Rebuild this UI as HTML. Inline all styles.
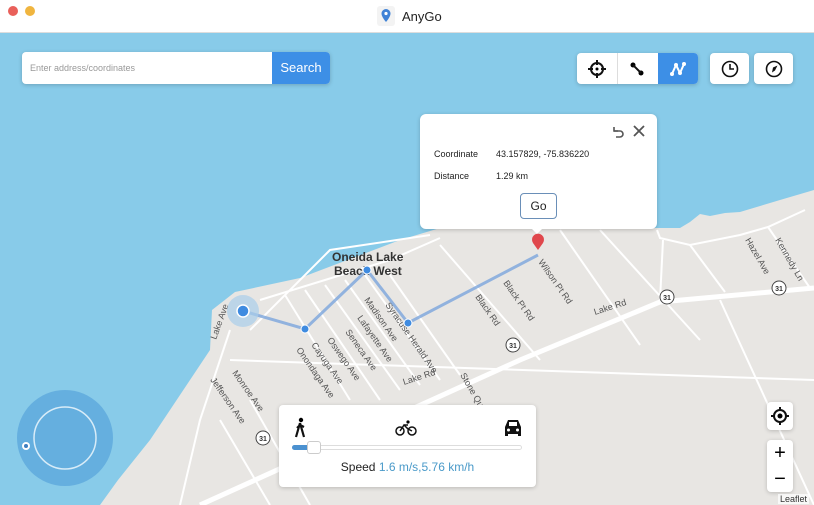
<!DOCTYPE html>
<html><head><style>
*{margin:0;padding:0;box-sizing:border-box}
body{width:814px;height:505px;overflow:hidden;font-family:"Liberation Sans",sans-serif;background:#fff;position:relative}
.title{position:absolute;left:0;top:0;width:814px;height:33px;background:#fff;border-bottom:1px solid #ddd}
.dot{position:absolute;top:6px;width:10px;height:10px;border-radius:50%}
.map{position:absolute;left:0;top:33px}
.abs{position:absolute}
.card{background:#fff;border-radius:4px;box-shadow:0 1px 4px rgba(0,0,0,.2)}
</style></head><body>
<div class="title">
<div class="dot" style="left:8px;background:#e9605a"></div>
<div class="dot" style="left:25px;background:#f0b53f"></div>
<svg class="abs" style="left:377px;top:6px" width="18" height="20"><rect x="0" y="0" width="18" height="20" rx="3" fill="#f3f3f3"/><path d="M9 3a4.5 4.5 0 0 1 4.5 4.5C13.5 11 9 16 9 16S4.5 11 4.5 7.5A4.5 4.5 0 0 1 9 3z" fill="#3f82d6"/><circle cx="9" cy="7.5" r="1.6" fill="#fff"/></svg>
<div class="abs" style="left:402px;top:9px;font-size:13px;color:#222">AnyGo</div>
</div>
<svg class="map" width="814" height="472" viewBox="0 33 814 472">
<rect x="0" y="33" width="814" height="472" fill="#88cbe9"/>
<path d="M814 190 L780 200 L740 212 L725 213 L710 216 L700 214 L690 222 L680 228 L657 228 L560 226 L440 228 L400 240 L300 278 L235 292 L212 310 L210 350 L180 395 L150 440 L118 480 L100 505 L814 505Z" fill="#e8e6e3"/>
<g stroke="#fff" stroke-width="2" fill="none">
<path d="M230 360 L814 380"/><path d="M250 330 L330 250 L430 235"/>
<path d="M260 300 L390 260 L440 238"/>
<path d="M285 295 L350 400"/><path d="M305 290 L380 400"/><path d="M325 285 L400 390"/><path d="M345 280 L420 385"/><path d="M365 275 L440 380"/><path d="M385 268 L460 375"/>
<path d="M440 245 L540 360"/><path d="M560 230 L640 345"/><path d="M600 230 L700 340"/><path d="M690 245 L725 292"/><path d="M768 227 L810 288"/>
<path d="M230 330 L200 420 L180 505"/><path d="M220 420 L270 505"/><path d="M250 400 L310 505"/>
<path d="M657 230 L660 238 L690 245 L740 235 L768 227 L805 210"/><path d="M663 240 L660 300"/><path d="M720 300 L814 505"/>
</g>
<path d="M200 505 L520 360 L660 302 L814 288" stroke="#fff" stroke-width="5" fill="none"/>
<g font-size="9" fill="#555">
<text x="595" y="315" transform="rotate(-18 595 315)">Lake Rd</text>
<text x="404" y="385" transform="rotate(-18 404 385)">Lake Rd</text>
<text x="538" y="262" transform="rotate(55 538 262)">Wilson Pt Rd</text>
<text x="503" y="283" transform="rotate(55 503 283)">Black Pt Rd</text>
<text x="475" y="297" transform="rotate(55 475 297)">Black Rd</text>
<text x="385" y="305" transform="rotate(55 385 305)">Syracuse Herald Ave</text>
<text x="364" y="300" transform="rotate(55 364 300)">Madison Ave</text>
<text x="357" y="318" transform="rotate(55 357 318)">Lafayette Ave</text>
<text x="345" y="332" transform="rotate(55 345 332)">Seneca Ave</text>
<text x="327" y="340" transform="rotate(55 327 340)">Oswego Ave</text>
<text x="311" y="345" transform="rotate(55 311 345)">Cayuga Ave</text>
<text x="296" y="350" transform="rotate(55 296 350)">Onondaga Ave</text>
<text x="216" y="340" transform="rotate(-70 216 340)">Lake Ave</text>
<text x="232" y="373" transform="rotate(55 232 373)">Monroe Ave</text>
<text x="210" y="380" transform="rotate(55 210 380)">Jefferson Ave</text>
<text x="460" y="375" transform="rotate(60 460 375)">Stone Quarry</text>
<text x="745" y="240" transform="rotate(60 745 240)">Hazel Ave</text>
<text x="775" y="240" transform="rotate(60 775 240)">Kennedy Ln</text>
</g>
<text x="332" y="261" font-size="12" font-weight="bold" fill="#333">Oneida Lake</text>
<text x="334" y="275" font-size="12" font-weight="bold" fill="#333">Beach West</text>
<g font-size="7" font-weight="bold" fill="#333" text-anchor="middle">
<circle cx="667" cy="297" r="7" fill="#fff" stroke="#444"/><text x="667" y="300">31</text>
<circle cx="779" cy="288" r="7" fill="#fff" stroke="#444"/><text x="779" y="291">31</text>
<circle cx="513" cy="345" r="7" fill="#fff" stroke="#444"/><text x="513" y="348">31</text>
<circle cx="263" cy="438" r="7" fill="#fff" stroke="#444"/><text x="263" y="441">31</text>
</g>
<path d="M243 311 L305 329 L367 270 L408 323 L538 255" stroke="#7ba5dc" stroke-width="3" fill="none" opacity=".8"/>
<circle cx="243" cy="311" r="16" fill="#a9cdea" opacity=".7"/>
<circle cx="243" cy="311" r="6" fill="#3f8be0" stroke="#fff" stroke-width="1.5"/>
<circle cx="305" cy="329" r="4" fill="#3f8be0" stroke="#fff"/>
<circle cx="367" cy="270" r="4" fill="#3f8be0" stroke="#fff"/>
<circle cx="408" cy="323" r="4" fill="#3f8be0" stroke="#fff"/>
<path d="M538 250 L533 243 A6 6 0 1 1 543 243Z" fill="#e0474c"/>
<circle cx="65" cy="438" r="48" fill="#5da7dc" opacity=".8"/>
<circle cx="65" cy="438" r="31" fill="none" stroke="#d8ecf8" stroke-width="1.5"/>
<circle cx="26" cy="446" r="4" fill="#fff"/><circle cx="26" cy="446" r="2" fill="#3f7fc0"/>
</svg>
<div class="abs card" style="left:22px;top:52px;width:308px;height:32px;overflow:hidden">
<div class="abs" style="left:8px;top:11px;font-size:9px;color:#999">Enter address/coordinates</div>
<div class="abs" style="left:250px;top:0;width:58px;height:32px;background:#3d8fe6;color:#fff;font-size:13px;line-height:32px;text-align:center">Search</div>
</div>
<div class="abs card" style="left:577px;top:53px;width:121px;height:31px;overflow:hidden">
<div class="abs" style="left:40px;top:0;width:1px;height:31px;background:#ddd"></div>
<div class="abs" style="left:81px;top:0;width:40px;height:31px;background:#3d8fe6"></div>
<svg class="abs" style="left:10px;top:6px" width="20" height="20"><circle cx="10" cy="10" r="6" fill="none" stroke="#111" stroke-width="2"/><circle cx="10" cy="10" r="1.5"/><path d="M10 1v5M10 14v5M1 10h5M14 10h5" stroke="#111" stroke-width="2"/></svg>
<svg class="abs" style="left:50px;top:6px" width="20" height="20"><circle cx="6" cy="6" r="2.5"/><circle cx="14" cy="14" r="2.5"/><path d="M6 6L14 14" stroke="#111" stroke-width="2"/></svg>
<svg class="abs" style="left:91px;top:6px" width="20" height="20"><path d="M4 15L8 6L12 14L16 5" stroke="#fff" stroke-width="2" fill="none"/><circle cx="4" cy="15" r="2" fill="#fff"/><circle cx="8" cy="6" r="2" fill="#fff"/><circle cx="12" cy="14" r="2" fill="#fff"/><circle cx="16" cy="5" r="2" fill="#fff"/></svg>
</div>
<div class="abs card" style="left:710px;top:53px;width:39px;height:31px"><svg class="abs" style="left:10px;top:6px" width="20" height="20"><circle cx="10" cy="10" r="7.5" fill="none" stroke="#111" stroke-width="1.6"/><path d="M10 5v5h4" stroke="#111" stroke-width="1.6" fill="none"/></svg></div>
<div class="abs card" style="left:754px;top:53px;width:39px;height:31px"><svg class="abs" style="left:10px;top:6px" width="20" height="20"><circle cx="10" cy="10" r="7.5" fill="none" stroke="#111" stroke-width="1.6"/><path d="M13.5 6.5L11 11.5 8 13.5 9 8.5Z" fill="#111"/></svg></div>
<div class="abs card" style="left:420px;top:114px;width:237px;height:115px;border-radius:6px">
<svg class="abs" style="left:191px;top:10px" width="14" height="14"><path d="M3 3v4h4" stroke="#555" stroke-width="1.6" fill="none"/><path d="M3 7h6a3 3 0 0 1 0 6H5" stroke="#555" stroke-width="1.6" fill="none"/></svg>
<svg class="abs" style="left:213px;top:11px" width="12" height="12"><path d="M1 1L11 11M11 1L1 11" stroke="#555" stroke-width="1.8"/></svg>
<div class="abs" style="left:14px;top:35px;font-size:9px;color:#222">Coordinate</div>
<div class="abs" style="left:76px;top:35px;font-size:9px;color:#222">43.157829, -75.836220</div>
<div class="abs" style="left:14px;top:57px;font-size:9px;color:#222">Distance</div>
<div class="abs" style="left:76px;top:57px;font-size:9px;color:#222">1.29 km</div>
<div class="abs" style="left:100px;top:79px;width:37px;height:26px;border:1px solid #6a8fb8;border-radius:4px;font-size:12px;line-height:24px;text-align:center;color:#222">Go</div>
</div>
<div class="abs" style="left:531px;top:228px;width:0;height:0;border-left:6px solid transparent;border-right:6px solid transparent;border-top:6px solid #fff"></div>
<div class="abs card" style="left:279px;top:405px;width:257px;height:82px">
<svg class="abs" style="left:14px;top:12px" width="16" height="22"><circle cx="8" cy="3" r="2.2"/><path d="M7 6L5 13L3 20M7 6L9 13L11 20M7 8L4 11M7 8L11 10" stroke="#111" stroke-width="2.2" fill="none"/></svg>
<svg class="abs" style="left:116px;top:14px" width="22" height="18"><circle cx="5" cy="12" r="4" fill="none" stroke="#111" stroke-width="1.5"/><circle cx="17" cy="12" r="4" fill="none" stroke="#111" stroke-width="1.5"/><path d="M5 12L9 6L13 10L17 12M9 6h4" stroke="#111" stroke-width="1.5" fill="none"/><circle cx="13" cy="3" r="1.6"/></svg>
<svg class="abs" style="left:223px;top:12px" width="22" height="22"><path d="M3 10L6 3H16L19 10V19H16V17H6V19H3Z" fill="#111"/><rect x="7" y="5" width="8" height="4" fill="#fff"/><circle cx="6.5" cy="13" r="1.5" fill="#fff"/><circle cx="15.5" cy="13" r="1.5" fill="#fff"/></svg>
<div class="abs" style="left:13px;top:40px;width:230px;height:5px;border:1px solid #ddd;border-radius:3px"></div>
<div class="abs" style="left:13px;top:40px;width:24px;height:5px;background:#4b91d0;border-radius:3px"></div>
<div class="abs" style="left:28px;top:36px;width:14px;height:13px;background:#fff;border:1px solid #ccc;border-radius:3px"></div>
<div class="abs" style="left:0;top:55px;width:257px;text-align:center;font-size:12px;color:#222">Speed <span style="color:#4a9ac9">1.6 m/s,5.76 km/h</span></div>
</div>
<div class="abs card" style="left:767px;top:402px;width:26px;height:28px"><svg class="abs" style="left:3px;top:4px" width="20" height="20"><circle cx="10" cy="10" r="6" fill="none" stroke="#111" stroke-width="2"/><circle cx="10" cy="10" r="2.5"/><path d="M10 1v3M10 16v3M1 10h3M16 10h3" stroke="#111" stroke-width="2"/></svg></div>
<div class="abs card" style="left:767px;top:440px;width:26px;height:52px">
<div class="abs" style="left:0;top:0;width:26px;text-align:center;font-size:20px;line-height:26px">+</div>
<div class="abs" style="left:0;top:26px;width:26px;text-align:center;font-size:20px;line-height:26px">−</div></div>
<div class="abs" style="left:778px;top:494px;font-size:9px;color:#333;background:rgba(255,255,255,.7);padding:0 2px">Leaflet</div>
</body></html>
